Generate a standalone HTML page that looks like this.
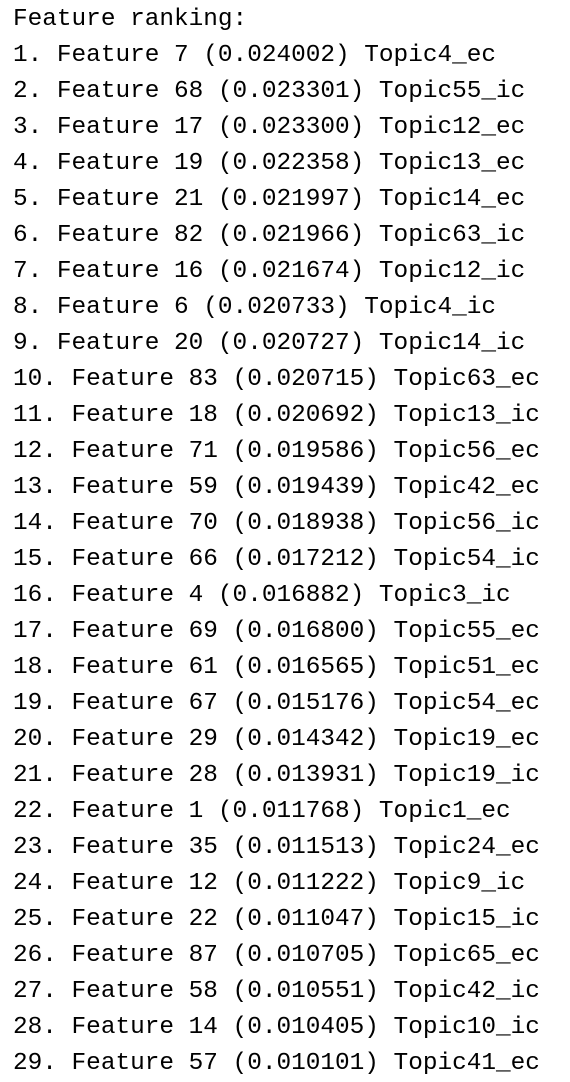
<!DOCTYPE html>
<html><head><style>
body{margin:0;background:#fff;width:570px;height:1054px;overflow:hidden}
pre{margin:0;padding:0 0 0 13px;position:relative;top:2px;font-family:"Liberation Mono",monospace;font-size:24.4px;line-height:36px;color:#000}
</style></head><body><pre>Feature ranking:
1. Feature 7 (0.024002) Topic4_ec
2. Feature 68 (0.023301) Topic55_ic
3. Feature 17 (0.023300) Topic12_ec
4. Feature 19 (0.022358) Topic13_ec
5. Feature 21 (0.021997) Topic14_ec
6. Feature 82 (0.021966) Topic63_ic
7. Feature 16 (0.021674) Topic12_ic
8. Feature 6 (0.020733) Topic4_ic
9. Feature 20 (0.020727) Topic14_ic
10. Feature 83 (0.020715) Topic63_ec
11. Feature 18 (0.020692) Topic13_ic
12. Feature 71 (0.019586) Topic56_ec
13. Feature 59 (0.019439) Topic42_ec
14. Feature 70 (0.018938) Topic56_ic
15. Feature 66 (0.017212) Topic54_ic
16. Feature 4 (0.016882) Topic3_ic
17. Feature 69 (0.016800) Topic55_ec
18. Feature 61 (0.016565) Topic51_ec
19. Feature 67 (0.015176) Topic54_ec
20. Feature 29 (0.014342) Topic19_ec
21. Feature 28 (0.013931) Topic19_ic
22. Feature 1 (0.011768) Topic1_ec
23. Feature 35 (0.011513) Topic24_ec
24. Feature 12 (0.011222) Topic9_ic
25. Feature 22 (0.011047) Topic15_ic
26. Feature 87 (0.010705) Topic65_ec
27. Feature 58 (0.010551) Topic42_ic
28. Feature 14 (0.010405) Topic10_ic
29. Feature 57 (0.010101) Topic41_ec</pre></body></html>
